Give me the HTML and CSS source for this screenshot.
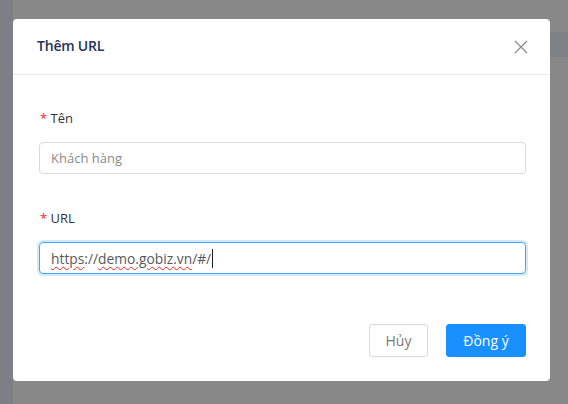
FILE: index.html
```html
<!DOCTYPE html>
<html lang="vi">
<head>
<meta charset="utf-8">
<link rel="stylesheet" href="styles.css">
</head>
<body>
<div class="backdrop">
  <div class="strip"></div>
  <div class="main">
    <div class="band"></div>
  </div>
</div>
<div class="modal">
  <div class="modal-header">
    <div class="title">Thêm URL</div>
    <svg class="close" width="14" height="14" viewBox="0 0 14 14"><path d="M1 1 L13 13 M13 1 L1 13" stroke="#8c8c8c" stroke-width="1.3" fill="none"/></svg>
  </div>
  <div class="modal-body">
    <div class="field">
      <label class="label"><span class="req">*</span> Tên</label>
      <div class="input"><span class="placeholder">Khách hàng</span></div>
    </div>
    <div class="field">
      <label class="label"><span class="req">*</span> URL</label>
      <div class="input focused"><span class="spell">https</span>://<span class="spell">demo.gobiz.vn</span>/#/<span class="caret"></span></div>
    </div>
  </div>
  <div class="modal-footer">
    <button class="btn">Hủy</button>
    <button class="btn primary">Đồng ý</button>
  </div>
</div>
</body>
</html>
```
FILE: styles.css
```css
html, body {
  margin: 0;
  padding: 0;
}
body {
  width: 568px;
  height: 404px;
  overflow: hidden;
  font-family: "Open Sans", "Noto Sans", sans-serif;
  position: relative;
}
.backdrop {
  display: flex;
  height: 404px;
}
.strip {
  width: 13px;
  background: #7c8085;
}
.main {
  flex: 1;
  background: #888888;
  padding-top: 32px;
  display: flex;
  justify-content: flex-end;
  align-items: flex-start;
}
.band {
  width: 20px;
  height: 25px;
  background: #7f8387;
}
.modal {
  position: absolute;
  left: 13px;
  top: 19px;
  width: 537px;
  height: 362px;
  background: #fff;
  border-radius: 4px;
  display: flex;
  flex-direction: column;
}
.modal-header {
  height: 56px;
  box-sizing: border-box;
  border-bottom: 1px solid #ececec;
  display: flex;
  align-items: center;
  justify-content: space-between;
  padding: 0 22px 0 24px;
}
.title {
  font-size: 14px;
  font-weight: 600;
  color: #25325a;
  margin-top: -3px;
  letter-spacing: -0.2px;
}
.close {
  margin-top: 1px;
}
.modal-body {
  padding: 33px 24px 0 26px;
  display: flex;
  flex-direction: column;
  gap: 34px;
}
.field {
  display: flex;
  flex-direction: column;
}
.label {
  font-size: 13px;
  color: #333;
  height: 20px;
  line-height: 20px;
  margin-bottom: 14px;
  padding-left: 1px;
}
.req {
  color: #f5222d;
  font-size: 13px;
}
.input {
  height: 32px;
  box-sizing: border-box;
  border: 1px solid #d9d9d9;
  border-radius: 4px;
  padding: 0 11px;
  display: flex;
  align-items: center;
  font-size: 13px;
  color: #595959;
  white-space: pre;
}
.placeholder {
  color: #8a8a8a;
}
.focused {
  border-color: #40a9ff;
  box-shadow: 0 0 0 2px rgba(24, 144, 255, 0.2);
  font-size: 13.8px;
}
.spell {
  text-decoration: underline wavy #e0281c;
  text-decoration-thickness: 1px;
  text-underline-offset: 2px;
}
.caret {
  display: inline-block;
  width: 1px;
  height: 19px;
  background: #222;
  margin-left: 1px;
}
.modal-footer {
  margin-top: auto;
  padding: 0 24px 24px 0;
  display: flex;
  justify-content: flex-end;
  gap: 18px;
}
.btn {
  height: 33px;
  box-sizing: border-box;
  border: 1px solid #d9d9d9;
  border-radius: 3px;
  background: #fff;
  color: #7a7a7a;
  font-family: "Open Sans", "Noto Sans", sans-serif;
  font-size: 14px;
  padding: 0;
  width: 59px;
}
.btn.primary {
  background: #1890ff;
  border-color: #1890ff;
  color: #fff;
  width: 80px;
}
```
